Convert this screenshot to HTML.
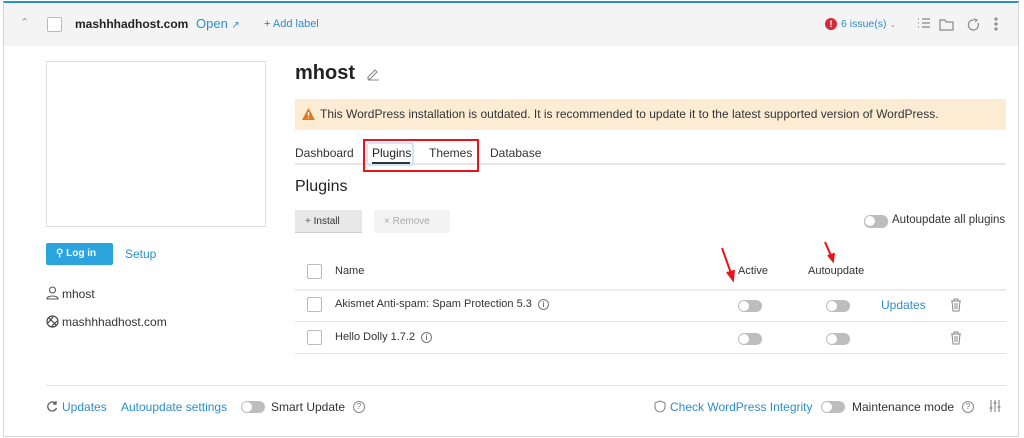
<!DOCTYPE html><html><head><style>
*{margin:0;padding:0;box-sizing:border-box}
body{width:1024px;height:438px;background:#fff;font-family:"Liberation Sans",sans-serif;color:#333;position:relative;overflow:hidden;font-size:12px}
.a{position:absolute;white-space:nowrap}
.b{color:#2c8fc9}
.cb{position:absolute;width:15px;height:15px;border:1px solid #bbb;border-radius:2px;background:#fff}
.tg{position:absolute;width:24px;height:12px;border-radius:6px;background:#bdbdbd}
.tg:after{content:"";position:absolute;left:1px;top:1px;width:10px;height:10px;border-radius:50%;background:#fff}
.ln{position:absolute;height:1px;background:#e2e2e2}
</style></head><body>
<div class="a" style="left:3px;top:1px;width:1016px;height:436px;border:1px solid #d6d6d6;border-top:2px solid #2a91c8"></div>
<div class="a" style="left:4px;top:3px;width:1014px;height:43px;background:#f4f4f4"></div>
<div class="a" style="left:20px;top:16px;color:#999;font-size:11px">&#8963;</div>
<div class="cb" style="left:47px;top:17px"></div>
<div class="a" style="left:75px;top:17px;font-weight:bold;font-size:12px;color:#222">mashhhadhost.com</div>
<div class="a b" style="left:196px;top:16px;font-size:13px">Open <span style="font-size:10px">&#8599;</span></div>
<div class="a b" style="left:264px;top:18px;font-size:11px"><span style="color:#666">+</span> Add label</div>
<div class="a" style="left:825px;top:18px;width:12px;height:12px;border-radius:50%;background:#d42a3a;color:#fff;font-size:9px;font-weight:bold;text-align:center;line-height:12px">!</div>
<div class="a b" style="left:841px;top:18px;font-size:10.5px">6 issue(s) <span style="color:#999;font-size:8px">&#8964;</span></div>
<svg class="a" style="left:915px;top:16px" width="90" height="16" fill="none" stroke="#888" stroke-width="1.2">
<path d="M3 3h1M3 7h1M3 11h1M7 3h8M7 7h8M7 11h8"/><path d="M25 4h5l1 2h7v8H25z"/>
<path d="M59 4a5 5 0 1 0 4 3M59 3l3 1-2 2"/><circle cx="81" cy="3" r="1"/><circle cx="81" cy="8" r="1"/><circle cx="81" cy="13" r="1"/></svg>
<div class="a" style="left:46px;top:61px;width:220px;height:166px;border:1px solid #ddd"></div>
<div class="a" style="left:295px;top:62px;font-size:20px;font-weight:bold;color:#222">mhost</div>
<svg class="a" style="left:366px;top:67px" width="14" height="14" fill="none" stroke="#888" stroke-width="1.1"><path d="M2 10l7-7 2 2-7 7H2zM2 13h11"/></svg>
<div class="a" style="left:295px;top:99px;width:711px;height:31px;background:#fdecd4"></div>
<svg class="a" style="left:302px;top:108px" width="13" height="12"><path d="M6.5 0L13 12H0z" fill="#e07a1f"/><path d="M6.5 4v4M6.5 9.5v1" stroke="#fff" stroke-width="1.3"/></svg>
<div class="a" style="left:320px;top:107px;font-size:12px">This WordPress installation is outdated. It is recommended to update it to the latest supported version of WordPress.</div>
<div class="ln" style="left:295px;top:163px;width:711px;height:2px;background:#e6e6e6"></div>
<div class="a" style="left:366px;top:142px;width:48px;height:24px;border:2px solid #cfe6f7;border-radius:3px"></div>
<div class="a" style="left:295px;top:146px;font-size:12px">Dashboard</div>
<div class="a" style="left:372px;top:146px;font-size:12px;color:#222">Plugins</div>
<div class="a" style="left:372px;top:162px;width:38px;height:2px;background:#333"></div>
<div class="a" style="left:429px;top:146px;font-size:12px">Themes</div>
<div class="a" style="left:490px;top:146px;font-size:12px">Database</div>
<div class="a" style="left:363px;top:139px;width:116px;height:33px;border:2px solid #e8141b"></div>
<div class="a" style="left:295px;top:178px;font-size:16px;color:#222">Plugins</div>
<div class="a" style="left:295px;top:210px;width:67px;height:23px;background:#e8e8e8;border-bottom:1px solid #ccc;font-size:10px;line-height:23px;padding-left:10px"><span style="color:#666">+</span> Install</div>
<div class="a" style="left:374px;top:210px;width:76px;height:23px;background:#f3f3f3;font-size:10px;line-height:23px;padding-left:10px;color:#aaa">× Remove</div>
<div class="tg" style="left:864px;top:215px;width:24px;height:13px"></div>
<div class="a" style="left:892px;top:214px;font-size:11.5px">Autoupdate all plugins</div>
<div class="cb" style="left:307px;top:264px"></div>
<div class="a" style="left:335px;top:265px;font-size:11px">Name</div>
<div class="a" style="left:738px;top:265px;font-size:11px">Active</div>
<div class="a" style="left:808px;top:265px;font-size:11px">Autoupdate</div>
<div class="ln" style="left:295px;top:289px;width:711px;height:2px;background:#ececec"></div>
<div class="cb" style="left:307px;top:297px"></div>
<div class="a" style="left:335px;top:298px;font-size:11px">Akismet Anti-spam: Spam Protection 5.3 <span style="display:inline-block;width:11px;height:11px;border:1px solid #777;border-radius:50%;font-size:8px;text-align:center;line-height:10px;margin-left:3px">i</span></div>
<div class="tg" style="left:738px;top:300px"></div>
<div class="tg" style="left:826px;top:300px"></div>
<div class="a b" style="left:881px;top:298px;font-size:12px">Updates</div>
<div class="ln" style="left:295px;top:321px;width:711px"></div>
<div class="cb" style="left:307px;top:330px"></div>
<div class="a" style="left:335px;top:331px;font-size:11px">Hello Dolly 1.7.2 <span style="display:inline-block;width:11px;height:11px;border:1px solid #777;border-radius:50%;font-size:8px;text-align:center;line-height:10px;margin-left:3px">i</span></div>
<div class="tg" style="left:738px;top:333px"></div>
<div class="tg" style="left:826px;top:333px"></div>
<div class="ln" style="left:295px;top:353px;width:711px"></div>
<svg class="a" style="left:950px;top:298px" width="12" height="50" fill="none" stroke="#888" stroke-width="1"><path d="M1 3h10M4 3V1h4v2M2 3l1 10h6l1-10M5 5v6M7 5v6"/><path transform="translate(0,33)" d="M1 3h10M4 3V1h4v2M2 3l1 10h6l1-10M5 5v6M7 5v6"/></svg>
<svg class="a" style="left:715px;top:238px" width="130" height="50" fill="none" stroke="#e8141b" stroke-width="2"><path d="M7 10l10 28"/><path d="M12 34l6 8 1-10" fill="#e8141b"/><path d="M110 4l7 16"/><path d="M113 17l5 6 1-8" fill="#e8141b"/></svg>
<div class="a" style="left:46px;top:243px;width:67px;height:22px;background:#2ba3dd;border-radius:2px;color:#fff;font-size:10px;font-weight:bold;line-height:22px;padding-left:10px">&#9906; Log in</div>
<div class="a b" style="left:125px;top:247px;font-size:12px">Setup</div>
<svg class="a" style="left:46px;top:286px" width="13" height="14" fill="none" stroke="#555" stroke-width="1.1"><circle cx="6.5" cy="4" r="3"/><path d="M1 13c0-4 11-4 11 0z"/></svg>
<div class="a" style="left:62px;top:287px;font-size:12px">mhost</div>
<svg class="a" style="left:46px;top:315px" width="13" height="13" fill="none" stroke="#444" stroke-width="1.2"><circle cx="6.5" cy="6.5" r="5.5"/><path d="M3 3l7 7M2 8l5-6M5 12l6-6"/></svg>
<div class="a" style="left:62px;top:315px;font-size:12px">mashhhadhost.com</div>
<div class="ln" style="left:46px;top:385px;width:960px"></div>
<svg class="a" style="left:46px;top:400px" width="12" height="12" fill="none" stroke="#555" stroke-width="1.2"><path d="M10 4A4.5 4.5 0 1 0 10.5 8M10 1v3H7"/></svg>
<div class="a b" style="left:62px;top:400px;font-size:12px">Updates</div>
<div class="a b" style="left:121px;top:400px;font-size:12px">Autoupdate settings</div>
<div class="tg" style="left:241px;top:401px"></div>
<div class="a" style="left:271px;top:400px;font-size:12px">Smart Update</div>
<div class="a" style="left:353px;top:401px;width:12px;height:12px;border:1px solid #888;border-radius:50%;font-size:8px;text-align:center;line-height:10px;color:#777">?</div>
<svg class="a" style="left:654px;top:400px" width="12" height="13" fill="none" stroke="#888" stroke-width="1.1"><path d="M6 1l5 2v4c0 3-3 5-5 5s-5-2-5-5V3z"/></svg>
<div class="a b" style="left:670px;top:400px;font-size:12px">Check WordPress Integrity</div>
<div class="tg" style="left:821px;top:401px"></div>
<div class="a" style="left:852px;top:400px;font-size:12px">Maintenance mode</div>
<div class="a" style="left:962px;top:401px;width:12px;height:12px;border:1px solid #888;border-radius:50%;font-size:8px;text-align:center;line-height:10px;color:#777">?</div>
<svg class="a" style="left:989px;top:399px" width="12" height="14" fill="none" stroke="#777" stroke-width="1"><path d="M2 1v12M6 1v12M10 1v12"/><path d="M0.5 9h3M4.5 4h3M8.5 8h3"/></svg>
</body></html>
